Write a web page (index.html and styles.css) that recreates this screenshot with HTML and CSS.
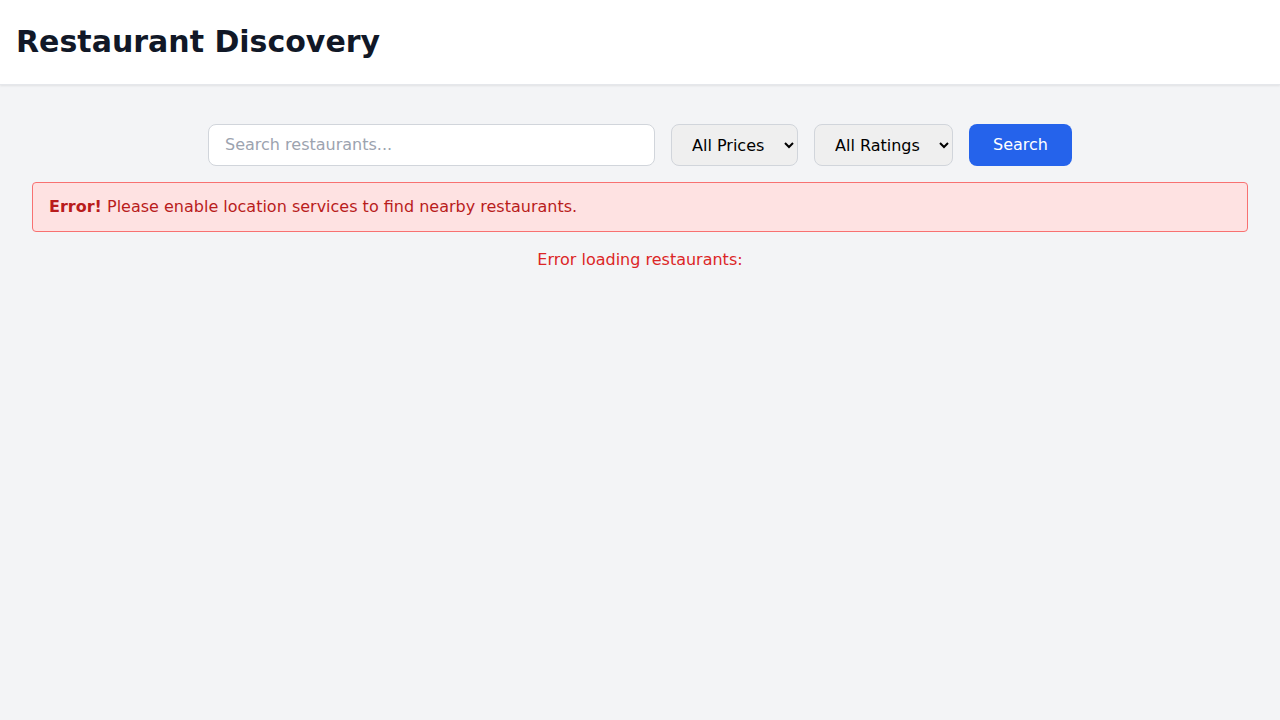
FILE: index.html
```html
<!DOCTYPE html>
<html lang="en">
<head>
<meta charset="utf-8">
<title>Restaurant Discovery</title>
<link rel="stylesheet" href="styles.css">
</head>
<body>
<header class="site-header">
  <h1 class="title">Restaurant Discovery</h1>
</header>
<main class="main">
  <form class="search-bar" onsubmit="return false;">
    <input class="search-input" type="text" placeholder="Search restaurants...">
    <select class="filter">
      <option>All Prices</option>
    </select>
    <select class="filter">
      <option>All Ratings</option>
    </select>
    <button class="search-btn" type="submit">Search</button>
  </form>
  <div class="alert"><strong>Error!</strong> Please enable location services to find nearby restaurants.</div>
  <p class="load-error">Error loading restaurants:</p>
</main>
</body>
</html>
```
FILE: styles.css
```css
* { box-sizing: border-box; }
html, body { margin: 0; padding: 0; }
body {
  background: #f3f4f6;
  font-family: "DejaVu Sans", sans-serif;
  font-size: 16px;
  line-height: 24px;
  color: #111827;
  min-height: 720px;
}
.site-header {
  background: #ffffff;
  padding: 24px 16px;
  box-shadow: 0 1px 2px rgba(0, 0, 0, 0.08);
  border-bottom: 1px solid #e5e7eb;
  height: 85px;
}
.title {
  margin: 0;
  font-size: 30px;
  line-height: 36px;
  font-weight: 700;
  color: #111827;
}
.main {
  padding: 39px 32px 32px;
}
.search-bar {
  display: flex;
  justify-content: center;
  gap: 16px;
  margin: 0 0 16px;
}
.search-input {
  width: 447px;
  height: 42px;
  padding: 7px 16px 9px;
  border: 1px solid #d1d5db;
  border-radius: 8px;
  background: #ffffff;
  font-family: inherit;
  font-size: 16px;
  color: #111827;
  outline: none;
}
.search-input::placeholder { color: #9ca3af; }
.filter {
  height: 42px;
  padding: 8px 16px 8px 16px;
  border: 1px solid #d1d5db;
  border-radius: 8px;
  background-color: #efefef;
  font-family: inherit;
  font-size: 16px;
  color: #000000;
}
.search-btn {
  height: 42px;
  padding: 7px 24px 9px;
  border: none;
  border-radius: 8px;
  background: #2563eb;
  color: #ffffff;
  font-family: inherit;
  font-size: 16px;
  cursor: pointer;
}
.alert {
  background: #fee2e2;
  border: 1px solid #f87171;
  color: #b91c1c;
  padding: 12px 16px;
  border-radius: 4px;
}
.alert strong { font-weight: 700; }
.load-error {
  margin: 16px 0 0;
  text-align: center;
  color: #dc2626;
}
```
